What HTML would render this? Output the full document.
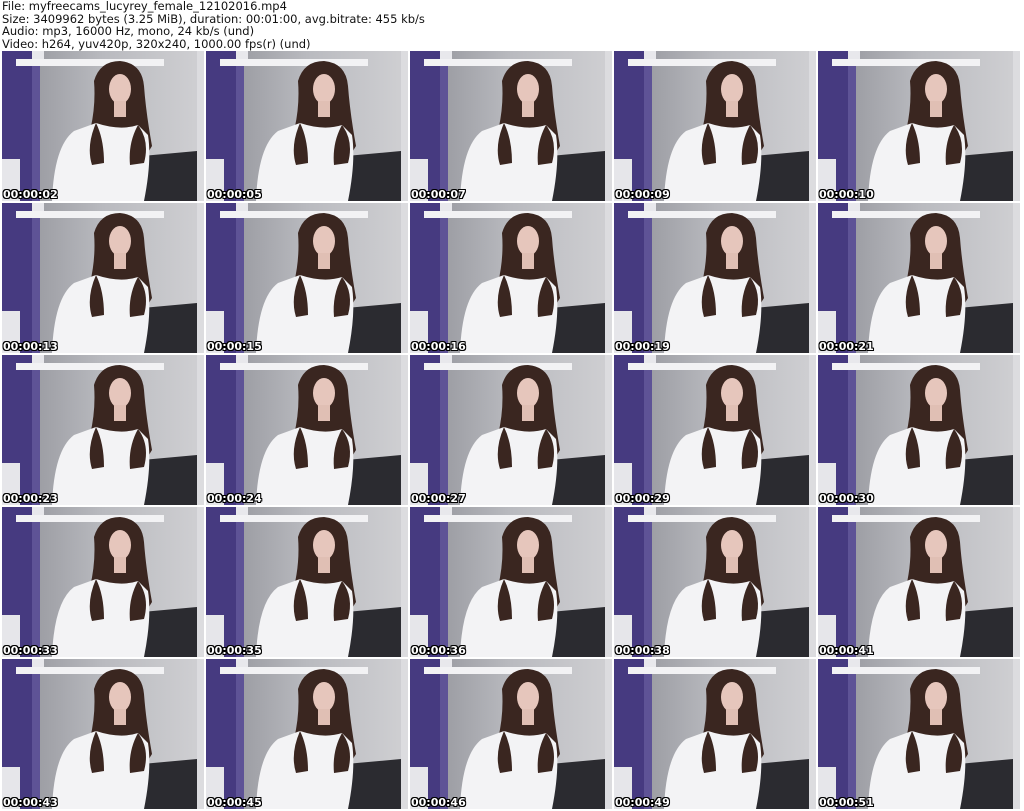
<!DOCTYPE html>
<html><head><meta charset="utf-8"><style>
body{margin:0;width:1024px;height:811px;background:#fff;overflow:hidden;position:relative;font-family:"DejaVu Sans","Liberation Sans",sans-serif}
.h{position:absolute;left:2px;top:0;font-size:11.5px;line-height:12.5px;color:#111}
.t{position:absolute;width:202px;height:150px;overflow:hidden}
.t svg{display:block}
.ts{position:absolute;left:1px;bottom:0;font-weight:bold;font-size:11px;color:#fff;text-shadow:1px 0 #000,-1px 0 #000,0 1px #000,0 -1px #000,1px 1px #000,-1px -1px #000,1px -1px #000,-1px 1px #000}
</style></head><body>
<svg width="0" height="0" style="position:absolute"><defs>
<linearGradient id="bg" x1="0" x2="1"><stop offset="0" stop-color="#8d8e95"/><stop offset=".5" stop-color="#b9babf"/><stop offset="1" stop-color="#d0d0d3"/></linearGradient>
<symbol id="th" viewBox="0 0 202 150">
<rect width="202" height="150" fill="url(#bg)"/>
<rect x="0" y="0" width="34" height="150" fill="#463a80"/>
<rect x="30" y="0" width="8" height="150" fill="#5e5396"/>
<rect x="195" y="0" width="7" height="150" fill="#dcdcdf"/>
<rect x="14" y="8" width="148" height="7" fill="#f2f2f4"/>
<rect x="30" y="0" width="12" height="8" fill="#e8e8ec"/>
<rect x="0" y="108" width="18" height="42" fill="#e6e6ea"/>
<path d="M140 105 L195 100 L195 150 L135 150 Z" fill="#2b2b30"/>
<path d="M92 30 Q98 10 118 10 Q140 12 142 35 Q144 62 150 95 Q140 112 130 114 L98 114 Q84 100 88 80 Q94 55 92 30Z" fill="#3a2620"/>
<ellipse cx="118" cy="38" rx="11" ry="15" fill="#e6c6bc"/>
<rect x="112" y="50" width="12" height="16" fill="#e0bfb4"/>
<path d="M50 150 Q52 95 72 80 L94 72 Q118 80 136 74 L146 84 Q150 110 142 150Z" fill="#f3f3f5"/>
<path d="M94 72 Q102 88 102 112 L90 114 Q84 95 94 72Z M136 74 Q126 92 128 114 L142 112 Q148 90 136 74Z" fill="#3a2620"/>
</symbol></defs></svg>
<div class="h">File: myfreecams_lucyrey_female_12102016.mp4<br>Size: 3409962 bytes (3.25 MiB), duration: 00:01:00, avg.bitrate: 455 kb/s<br>Audio: mp3, 16000 Hz, mono, 24 kb/s (und)<br>Video: h264, yuv420p, 320x240, 1000.00 fps(r) (und)</div>
<div id="g"></div>
<script>
var ts=["02","05","07","09","10","13","15","16","19","21","23","24","27","29","30","33","35","36","38","41","43","45","46","49","51"];
var h="";
for(var r=0;r<5;r++)for(var c=0;c<5;c++){var i=r*5+c;
h+='<div class="t" style="left:'+(2+c*204)+'px;top:'+(51+r*152)+'px"><svg width="202" height="150"><use href="#th"/></svg><div class="ts">00:00:'+ts[i]+'</div></div>';}
document.getElementById("g").innerHTML=h;
</script>
</body></html>
